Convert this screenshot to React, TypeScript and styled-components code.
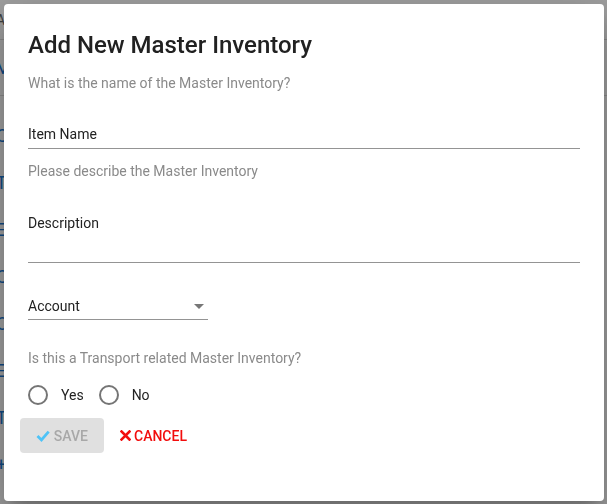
import React from 'react'
import styled, { createGlobalStyle } from 'styled-components'

const GlobalStyle = createGlobalStyle`
  html, body {
    margin: 0;
    padding: 0;
    font-family: Roboto, "Liberation Sans", Arial, sans-serif;
    background: #fff;
  }
  * { box-sizing: border-box; }
`

/* ---------- page behind the dialog ---------- */

const Page = styled.div`
  height: 504px;
  overflow: hidden;
  background: #fff;
`

const Header = styled.div`
  height: 40px;
  border-bottom: 1px solid #ddd;
  display: flex;
  align-items: center;
  margin-left: -4px;
  font-size: 14px;
  color: #666;
`

const TabsBar = styled.div`
  height: 56px;
  border-bottom: 1px solid #ddd;
  display: flex;
  align-items: center;
  margin-left: -5px;
  font-size: 18px;
  color: #1976d2;
`

const List = styled.div`
  display: flex;
  flex-direction: column;
  padding-top: 16px;
  margin-left: -4px;
`

const ListItem = styled.div`
  height: 47px;
  display: flex;
  align-items: center;
  font-size: 18px;
  color: #1976d2;
`

/* ---------- dialog ---------- */

const Backdrop = styled.div`
  position: fixed;
  inset: 0;
  background: rgba(0, 0, 0, 0.38);
`

const Dialog = styled.div`
  position: fixed;
  left: 4px;
  top: 4px;
  width: 600px;
  height: 497px;
  background: #fff;
  border-radius: 4px;
  box-shadow: 0 11px 15px -7px rgba(0, 0, 0, 0.2), 0 24px 38px 3px rgba(0, 0, 0, 0.14),
    0 9px 46px 8px rgba(0, 0, 0, 0.12);
  padding: 25px 24px 0;
  display: flex;
  flex-direction: column;
`

const Title = styled.h2`
  margin: 0;
  font-size: 24px;
  line-height: 32px;
  font-weight: 500;
  color: #212121;
`

const Hint = styled.p<{ $top: number }>`
  margin: ${(p) => p.$top}px 0 0;
  font-size: 14px;
  line-height: 20px;
  color: #8a8a8a;
`

const Field = styled.div<{ $top: number; $pad: number; $width?: number }>`
  margin-top: ${(p) => p.$top}px;
  width: ${(p) => (p.$width ? `${p.$width}px` : '100%')};
  padding-bottom: ${(p) => p.$pad}px;
  border-bottom: 1px solid #949494;
  font-size: 14px;
  line-height: 20px;
  color: #222;
  display: flex;
  align-items: center;
  justify-content: space-between;
`

const Arrow = styled.span`
  width: 0;
  height: 0;
  border-left: 5px solid transparent;
  border-right: 5px solid transparent;
  border-top: 5px solid #777;
  margin-right: 4px;
`

const RadioRow = styled.div`
  margin-top: 15px;
  height: 24px;
  display: flex;
  align-items: center;
`

const RadioOption = styled.label`
  display: flex;
  align-items: center;
  gap: 13px;
  margin-right: 15px;
  font-size: 14px;
  color: #222;
`

const Actions = styled.div`
  margin-top: 11px;
  margin-left: -8px;
  display: flex;
  align-items: center;
  gap: 16px;
`

const Button = styled.button<{ $variant: 'save' | 'cancel' }>`
  height: 35px;
  border: none;
  border-radius: 4px;
  padding: ${(p) => (p.$variant === 'save' ? '0 16px' : '0')};
  width: ${(p) => (p.$variant === 'save' ? '84px' : 'auto')};
  background: ${(p) => (p.$variant === 'save' ? '#e0e0e0' : 'transparent')};
  color: ${(p) => (p.$variant === 'save' ? '#a8a8a8' : '#f20d0d')};
  font-family: Roboto, "Liberation Sans", Arial, sans-serif;
  font-size: 14px;
  line-height: 20px;
  font-weight: 500;
  display: flex;
  align-items: center;
  gap: ${(p) => (p.$variant === 'save' ? '4px' : '3px')};
`

const RadioIcon = () => (
  <svg width="20" height="20" viewBox="0 0 20 20">
    <circle cx="10" cy="10" r="9" fill="none" stroke="#757575" strokeWidth="2" />
  </svg>
)

const CheckIcon = () => (
  <svg width="14" height="12" viewBox="0 0 14 12">
    <path d="M1.5 6l4 4L12.8 1.6" fill="none" stroke="#4fc3f7" strokeWidth="2.8" />
  </svg>
)

const CloseIcon = () => (
  <svg width="11" height="11" viewBox="0 0 11 11">
    <path d="M1.5 1.5l8 8M9.5 1.5l-8 8" stroke="#f20d0d" strokeWidth="2.6" strokeLinecap="square" />
  </svg>
)

const App = () => {
  const items = ['C', 'T', 'E', 'C', 'O', 'E', 'T', '+']
  return (
    <>
      <GlobalStyle />
      <Page>
        <Header>Admin</Header>
        <TabsBar>MASTER</TabsBar>
        <List>
          {items.map((t, i) => (
            <ListItem key={i}>{t}</ListItem>
          ))}
        </List>
      </Page>
      <Backdrop />
      <Dialog>
        <Title>Add New Master Inventory</Title>
        <Hint $top={12}>What is the name of the Master Inventory?</Hint>
        <Field $top={31} $pad={4}>Item Name</Field>
        <Hint $top={12}>Please describe the Master Inventory</Hint>
        <Field $top={32} $pad={29}>Description</Field>
        <Field $top={33} $pad={3} $width={180}>
          Account
          <Arrow />
        </Field>
        <Hint $top={28}>Is this a Transport related Master Inventory?</Hint>
        <RadioRow>
          <RadioOption>
            <RadioIcon />
            Yes
          </RadioOption>
          <RadioOption>
            <RadioIcon />
            No
          </RadioOption>
        </RadioRow>
        <Actions>
          <Button $variant="save" disabled>
            <CheckIcon />
            SAVE
          </Button>
          <Button $variant="cancel">
            <CloseIcon />
            CANCEL
          </Button>
        </Actions>
      </Dialog>
    </>
  )
}

export default App
